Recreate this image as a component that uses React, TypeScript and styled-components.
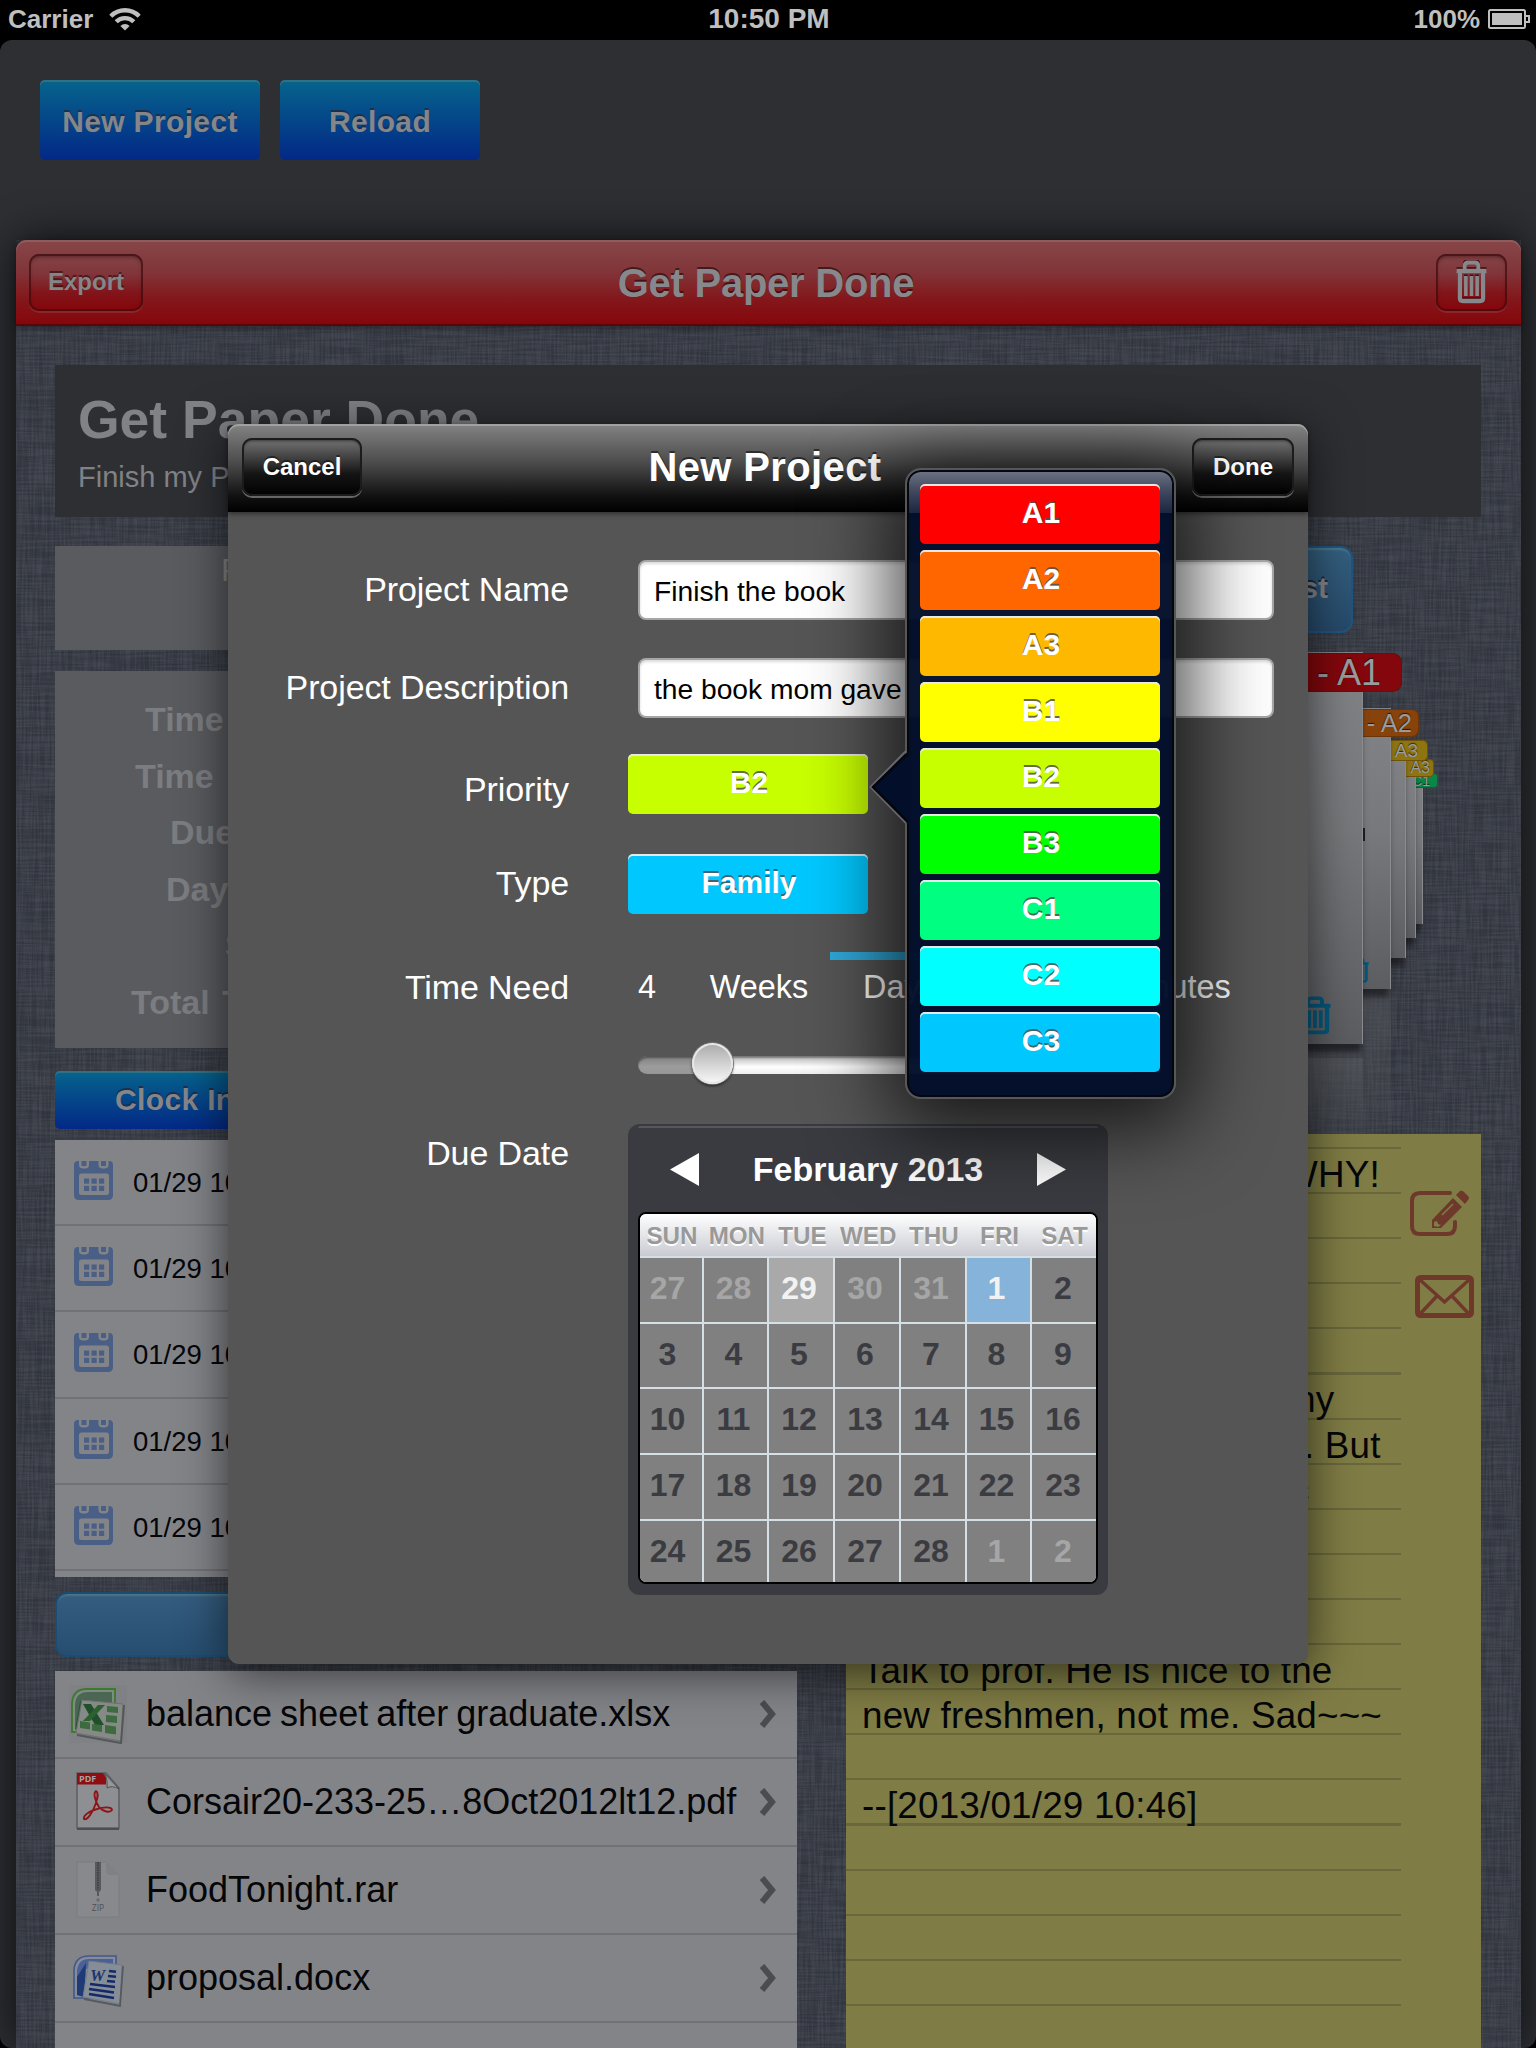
import React from "react";
import styled, { createGlobalStyle, css } from "styled-components";

const GlobalStyle = createGlobalStyle`
  html, body { margin: 0; padding: 0; background: #000; }
  *, *::before, *::after { box-sizing: border-box; }
  body { font-family: "Liberation Sans", Arial, Helvetica, sans-serif; }
`;

/* ---------- shell ---------- */

const Device = styled.div`
  position: relative;
  width: 1536px;
  height: 2048px;
  overflow: hidden;
  background: #000;
  display: flex;
  flex-direction: column;
`;

const StatusBar = styled.div`
  height: 40px;
  flex: none;
  display: grid;
  grid-template-columns: 1fr auto 1fr;
  align-items: center;
  padding: 0 6px 2px 8px;
  color: #bfbfbf;
  font-weight: bold;
  font-size: 26px;
`;

const StatusSide = styled.div<{ $end?: boolean }>`
  display: flex;
  align-items: center;
  gap: ${(p) => (p.$end ? 8 : 16)}px;
  justify-content: ${(p) => (p.$end ? "flex-end" : "flex-start")};
`;

const Clock = styled.div`
  font-size: 28px;
`;

const Screen = styled.div`
  flex: 1;
  display: flex;
  flex-direction: column;
  background: #2e2f33;
  border-radius: 12px;
  overflow: hidden;
`;

const Toolbar = styled.div`
  height: 200px;
  flex: none;
  display: flex;
  gap: 20px;
  padding: 40px 0 0 40px;
`;

const BlueButton = styled.div<{ $w: number; $h: number; $size: number }>`
  width: ${(p) => p.$w}px;
  height: ${(p) => p.$h}px;
  flex: none;
  display: flex;
  align-items: center;
  justify-content: center;
  border-radius: 5px;
  background: linear-gradient(#06648c, #032887);
  box-shadow: inset 0 2px 0 #2f7186;
  color: #85868a;
  font-size: ${(p) => p.$size}px;
  font-weight: bold;
  letter-spacing: 0.35px;
  text-shadow: 0 -2px 0 rgba(30, 45, 70, 0.9);
  padding-top: 3px;
`;

const Panel = styled.div`
  position: relative;
  width: 1505px;
  margin-left: 16px;
  flex: 1;
  display: flex;
  flex-direction: column;
  background: #343842;
  border-radius: 11px 11px 0 0;
  box-shadow: 0 0 44px rgba(0, 0, 0, 0.75);
`;

const Linen = styled.svg`
  position: absolute;
  inset: 0;
  width: 100%;
  height: 100%;
`;

const PanelHeader = styled.div`
  position: relative;
  height: 86px;
  flex: none;
  display: grid;
  grid-template-columns: 1fr auto 1fr;
  padding: 14px 14px 0 13px;
  border-radius: 11px 11px 0 0;
  background: linear-gradient(#874648, #81363a 35%, #83181c 68%, #85050a);
  box-shadow: inset 0 2px 0 #8f5c5e, inset 0 -2px 0 #5c0508, 0 2px 6px rgba(0, 0, 0, 0.35);
`;

const BarTitle = styled.div<{ $color: string; $track: number }>`
  align-self: start;
  padding-right: 4px;
  font-size: 40px;
  font-weight: bold;
  line-height: 58px;
  letter-spacing: ${(p) => p.$track}px;
  color: ${(p) => p.$color};
  text-shadow: 0 -2px 0 rgba(0, 0, 0, 0.5);
`;

const BarButton = styled.div<{ $w: number; $dark?: boolean; $end?: boolean }>`
  width: ${(p) => p.$w}px;
  height: ${(p) => (p.$dark ? 58 : 57)}px;
  justify-self: ${(p) => (p.$end ? "end" : "start")};
  display: flex;
  align-items: center;
  justify-content: center;
  padding-bottom: 1px;
  border-radius: 10px;
  font-size: 24px;
  font-weight: bold;
  text-shadow: 0 -2px 0 rgba(0, 0, 0, 0.45);
  ${(p) =>
    p.$dark
      ? css`
          color: #fff;
          background: linear-gradient(#777, #444 32%, #141414 62%, #000);
          box-shadow: inset 0 0 0 2px #1c1c1c, inset 0 3px 3px rgba(0, 0, 0, 0.5), 0 2px 0 #666;
        `
      : css`
          color: #858689;
          background: linear-gradient(#854649, #80353a 35%, #81151a 68%, #85050a);
          box-shadow: inset 0 0 0 2px rgba(62, 12, 16, 0.65), inset 0 3px 4px rgba(50, 0, 0, 0.5),
            0 2px 0 rgba(150, 60, 64, 0.5);
        `}
`;

const PanelBody = styled.div`
  position: relative;
  flex: 1;
  padding: 39px 40px 0 39px;
  display: flex;
  flex-direction: column;
`;

const Summary = styled.div`
  height: 152px;
  flex: none;
  padding: 23px 24px 0 23px;
  background: #2e2f33;
  color: #818286;
`;

const SummaryTitle = styled.div`
  font-size: 53.5px;
  line-height: 64px;
  font-weight: bold;
`;

const SummaryText = styled.div`
  font-size: 29px;
  line-height: 40px;
  margin-top: 5px;
`;

const Columns = styled.div`
  flex: 1;
  display: flex;
  justify-content: space-between;
  padding-top: 29px;
`;

const LeftColumn = styled.div`
  width: 742px;
  display: flex;
  flex-direction: column;
`;

const PriorityBox = styled.div`
  height: 104px;
  background: #5a5b5f;
  padding: 2px 0 0 166px;
  font-size: 32px;
  line-height: 44px;
  color: #85868a;
`;

const StatsBox = styled.div`
  height: 377px;
  margin: 21px 0 23px;
  padding-top: 20px;
  background: #5a5b5f;
`;

const Stat = styled.div<{ $indent: number }>`
  padding-left: ${(p) => p.$indent}px;
  font-size: 34px;
  line-height: 56.6px;
  font-weight: bold;
  word-spacing: 3px;
  color: #7c7d80;
  white-space: pre;
`;

const ClockButton = styled(BlueButton)`
  width: 300px;
  justify-content: flex-start;
  padding: 0 0 0 60px;
`;

const LogList = styled.div`
  height: 437px;
  margin: 11px 0 15px;
  overflow: hidden;
  background: #838488;
`;

const LogRow = styled.div`
  height: 86.2px;
  display: flex;
  align-items: center;
  gap: 20px;
  padding: 0 0 0 19px;
  border-bottom: 2px solid #717276;
  color: #050608;
  font-size: 27.5px;
  white-space: pre;
`;

const LogTime = styled.span`
  padding-top: 2px;
`;

const LogMark = styled.svg`
  margin-bottom: 3px;
`;

const AttachButton = styled.div`
  height: 65px;
  flex: none;
  border-radius: 12px;
  border: 2px solid #1e4c70;
  background: linear-gradient(#355d80, #264e70);
  box-shadow: inset 0 3px 2px -1px #4a7689;
`;

const FileList = styled.div`
  flex: 1;
  margin-top: 14px;
  background: #838488;
`;

const FileRow = styled.div`
  height: 88px;
  display: flex;
  align-items: center;
  padding: 0 20px 0 5px;
  border-bottom: 2px solid #717276;
`;

const FileName = styled.div`
  flex: 1;
  margin-left: 16px;
  font-size: 36px;
  line-height: 40px;
  word-spacing: -2px;
  padding-bottom: 1px;
  white-space: nowrap;
  color: #050608;
`;

const RightColumn = styled.div`
  width: 635px;
  display: flex;
  flex-direction: column;
`;

/* ---------- stacked project cards: free 3D carousel canvas ---------- */

const Deck = styled.div`
  position: relative;
  height: 588px;
  flex: none;
  overflow: hidden;
`;

const ListButton = styled.div`
  width: 260px;
  height: 87px;
  margin-left: 247px;
  border-radius: 12px;
  border: 2px solid #21557d;
  background: linear-gradient(#34607f, #26496a);
  box-shadow: inset 0 3px 2px -1px #4a7a94;
  display: flex;
  align-items: center;
  justify-content: flex-end;
  padding: 0 23px 3px 0;
  font-size: 30px;
  font-weight: bold;
  color: #84868a;
  text-shadow: 0 -2px 0 rgba(20, 30, 45, 0.8);
`;

const Sheet = styled.div<{ $right: number; $top: number; $bottom: number }>`
  position: absolute;
  left: 380px;
  width: ${(p) => p.$right - 380}px;
  top: ${(p) => p.$top}px;
  height: ${(p) => p.$bottom - p.$top}px;
  background: linear-gradient(#828387, #77787b 45%, #5c5d61);
  box-shadow: 0 10px 6px -2px rgba(25, 26, 30, 0.75), inset -1px 0 0 #8a8b8f;
`;

const Reflection = styled.div<{ $right: number; $top: number }>`
  position: absolute;
  left: 380px;
  width: ${(p) => p.$right - 380}px;
  top: ${(p) => p.$top}px;
  bottom: 0;
  background: linear-gradient(rgba(90, 92, 96, 0.5), rgba(70, 72, 78, 0.15));
`;

const Badge = styled.div<{ $right: number; $top: number; $h: number; $size: number; $pad: number; $bg: string }>`
  position: absolute;
  left: 380px;
  width: ${(p) => p.$right - 380}px;
  top: ${(p) => p.$top}px;
  height: ${(p) => p.$h}px;
  padding-right: ${(p) => p.$pad}px;
  display: flex;
  align-items: center;
  justify-content: flex-end;
  border-radius: ${(p) => p.$h * 0.25}px;
  background: ${(p) => p.$bg};
  box-shadow: inset 0 0 0 1px rgba(60, 30, 0, 0.4);
  font-size: ${(p) => p.$size}px;
  color: #9a9b9e;
  text-shadow: 0 -1px 1px rgba(0, 0, 0, 0.7);
  white-space: pre;
`;

const DeckGlyph = styled.div<{ $x: number; $y: number }>`
  position: absolute;
  left: ${(p) => p.$x}px;
  top: ${(p) => p.$y}px;
  line-height: 0;
`;

/* ---------- notes ---------- */

const Notes = styled.div`
  flex: 1;
  display: flex;
  background: #7f7c45;
`;

const NoteLines = styled.div`
  width: 555px;
  padding: 14px 0 0 16px;
  background: repeating-linear-gradient(transparent 0 43px, #69673b 43px 45.1px) 0 -30px;
  background-size: 100% 1200px;
`;

const NoteLine = styled.div<{ $indent: number }>`
  height: 45.1px;
  padding-left: ${(p) => p.$indent}px;
  font-size: 36.8px;
  letter-spacing: 0.2px;
  line-height: 54px;
  color: #050608;
  white-space: pre;
`;

const NoteActions = styled.div`
  flex: 1;
  display: flex;
  flex-direction: column;
  align-items: flex-end;
  gap: 37px;
  padding: 56px 7px 0 0;
`;

const ComposeMark = styled.svg`
  margin-right: 4px;
`;

/* ---------- modal ---------- */

const Modal = styled.div`
  position: absolute;
  left: 228px;
  top: 424px;
  width: 1080px;
  height: 1240px;
  display: flex;
  flex-direction: column;
  border-radius: 11px;
  background: #555;
  box-shadow: 0 8px 48px rgba(0, 0, 0, 0.62);
`;

const ModalHeader = styled.div`
  height: 88px;
  flex: none;
  display: grid;
  grid-template-columns: 1fr auto 1fr;
  padding: 14px;
  border-radius: 11px 11px 0 0;
  background: linear-gradient(#838383, #4a4a4a 45%, #111 82%, #000);
  box-shadow: inset 0 2px 0 #a0a0a0, 0 2px 5px rgba(0, 0, 0, 0.45);
`;

const ModalTitle = styled(BarTitle)`
  padding-right: 6px;
`;

const Form = styled.div`
  padding-top: 48px;
  display: flex;
  flex-direction: column;
`;

const FormRow = styled.div<{ $h: number; $gap: number }>`
  height: ${(p) => p.$h}px;
  margin-bottom: ${(p) => p.$gap}px;
  display: flex;
`;

const Label = styled.div<{ $top: number }>`
  width: 341px;
  flex: none;
  margin-right: 59px;
  padding-top: ${(p) => p.$top}px;
  text-align: right;
  font-size: 34px;
  letter-spacing: -0.1px;
  line-height: 40px;
  color: #fff;
`;

const Field = styled.div`
  width: 636px;
  height: 60px;
  margin-left: 10px;
  display: flex;
  align-items: center;
  padding: 2px 14px 0;
  border: 2px solid #a6a6a6;
  border-radius: 8px;
  background: #fff;
  box-shadow: inset 0 2px 3px rgba(0, 0, 0, 0.15);
  font-size: 28.2px;
  color: #000;
  white-space: pre;
`;

const Choice = styled.div<{ $bg: string }>`
  width: 240px;
  height: 60px;
  flex: none;
  display: flex;
  align-items: center;
  justify-content: center;
  padding: 0 0 2px 2px;
  border-radius: 5px;
  background: ${(p) => p.$bg};
  box-shadow: inset 0 2px 0 #e8e8e8;
  color: #fff;
  font-size: 30px;
  font-weight: bold;
  text-shadow: 0 -2px 0 rgba(80, 80, 80, 0.85);
`;

const TimeControl = styled.div`
  width: 640px;
  margin-left: 10px;
`;

const Units = styled.div`
  display: flex;
  height: 60px;
  color: #fff;
  font-size: 32.4px;
`;

const Amount = styled.div`
  width: 50px;
  padding-top: 17px;
`;

const Unit = styled.div<{ $active?: boolean; $w?: number }>`
  width: ${(p) => p.$w ?? 142}px;
  height: 54px;
  padding-top: 9px;
  text-align: center;
  border-top: 8px solid ${(p) => (p.$active ? "#2fa8d9" : "transparent")};
`;

const Slider = styled.div`
  height: 18px;
  width: 500px;
  margin-top: 44px;
  display: flex;
  align-items: center;
  border-radius: 9px;
  background: linear-gradient(90deg, rgba(96, 96, 96, 0.62) 75px, transparent 75px), linear-gradient(#b4b4b4, #fff 60%, #eee);
  box-shadow: inset 0 2px 2px rgba(0, 0, 0, 0.35);
`;

const Knob = styled.div`
  width: 41px;
  height: 41px;
  margin: -3px 0 0 54px;
  border-radius: 50%;
  background: linear-gradient(#a9a9a9, #fafafa);
  box-shadow: inset 0 0 0 2px #e6e6e6, 0 0 0 1px #777, 0 2px 3px rgba(0, 0, 0, 0.6);
`;

/* ---------- calendar ---------- */

const Calendar = styled.div`
  width: 480px;
  height: 471px;
  padding: 2px 10px 11px;
  border-radius: 12px;
  background: #3a3b40;
`;

const MonthBar = styled.div`
  height: 86px;
  display: flex;
  align-items: center;
  justify-content: space-between;
  padding: 0 32px 2px;
  border-top: 2px solid #55565e;
  border-radius: 2px;
  color: #fff;
  font-size: 34px;
  font-weight: bold;
  line-height: 40px;
`;

const MonthGrid = styled.div`
  height: 372px;
  border: 2px solid #000;
  border-radius: 8px;
  overflow: hidden;
  background: #d5dfe6;
`;

const WeekHead = styled.div`
  height: 42px;
  display: grid;
  grid-template-columns: 64px repeat(5, 65.7px) 64px;
  background: linear-gradient(#fff, #c9cbd2);
  color: #999;
  font-size: 24.2px;
  font-weight: bold;
  line-height: 43px;
  text-align: center;
  text-shadow: 0 2px 0 #fff;
`;

const Days = styled.div`
  display: grid;
  grid-template-columns: 62px 63px 64px 64px 64px 63px 64px;
  grid-template-rows: 64px 63px 64px 64px 64px;
  gap: 2px;
  padding-top: 2px;
`;

type DayKind = "normal" | "muted" | "today" | "picked";
const dayBg: Record<DayKind, string> = { normal: "#808080", muted: "#808080", today: "#a9a9a9", picked: "#86b3d9" };
const dayFg: Record<DayKind, string> = { normal: "#3b3c42", muted: "#a6a6a6", today: "#f2f2f2", picked: "#f2f2f2" };

const Day = styled.div<{ $kind: DayKind }>`
  display: flex;
  align-items: center;
  justify-content: center;
  padding: 0 4px 3px 0;
  font-size: 32px;
  font-weight: bold;
  background: ${(p) => dayBg[p.$kind]};
  color: ${(p) => dayFg[p.$kind]};

  &:nth-child(7n + 1) {
    padding-right: 7px;
  }

  &:nth-child(7n) {
    padding-right: 2px;
  }
`;

/* ---------- priority popover ---------- */

const Popover = styled.div`
  position: absolute;
  left: 905px;
  top: 468px;
  width: 271px;
  height: 631px;
  padding: 14px 13px 0;
  display: flex;
  flex-direction: column;
  gap: 6px;
  border-radius: 16px;
  border: 2px solid #56575a;
  background: linear-gradient(#6f7585, #414a60 20px, #1b2640 43px, rgba(2, 14, 42, 0.97) 43px);
  box-shadow: inset 0 0 0 2px #05070c, 0 14px 80px 16px rgba(0, 0, 0, 0.72);
`;

const PopArrow = styled.svg`
  position: absolute;
  left: -38px;
  top: 280px;
`;

/* ---------- drawings ---------- */

const LinenTexture = () => (
  <Linen aria-hidden="true">
    <filter id="weft" x="0" y="0" width="100%" height="100%" colorInterpolationFilters="sRGB">
      <feTurbulence type="fractalNoise" baseFrequency="0.02 0.5" numOctaves={3} seed={4} />
      <feColorMatrix values="3 0 0 0 -1  3 0 0 0 -1  3 0 0 0 -1  0 0 0 0 0.04" />
    </filter>
    <filter id="warp" x="0" y="0" width="100%" height="100%" colorInterpolationFilters="sRGB">
      <feTurbulence type="fractalNoise" baseFrequency="0.5 0.02" numOctaves={3} seed={9} />
      <feColorMatrix values="3 0 0 0 -1  3 0 0 0 -1  3 0 0 0 -1  0 0 0 0 0.04" />
    </filter>
    <rect width="100%" height="100%" filter="url(#weft)" />
    <rect width="100%" height="100%" filter="url(#warp)" />
  </Linen>
);

const Wifi = () => (
  <svg width="32" height="24" viewBox="0 0 32 24" fill="none" stroke="#bfbfbf" strokeWidth="4.4">
    <path d="M1.8 9.2 A20 20 0 0 1 30.2 9.2" />
    <path d="M7.2 14.8 A12.4 12.4 0 0 1 24.8 14.8" />
    <path d="M16 23.6 L11.4 19 A6.5 6.5 0 0 1 20.6 19 Z" fill="#bfbfbf" stroke="none" />
  </svg>
);

const Battery = () => (
  <svg width="42" height="20" viewBox="0 0 42 20">
    <rect x="1" y="1" width="36" height="18" rx="1.5" fill="none" stroke="#bfbfbf" strokeWidth="2" />
    <rect x="4" y="4" width="30" height="12" fill="#bfbfbf" />
    <path d="M38 7h3v6h-3" fill="none" stroke="#bfbfbf" strokeWidth="2" />
  </svg>
);

const TrashGlyph = ({ color, w, h, shadow }: { color: string; w: number; h: number; shadow?: boolean }) => {
  const shape = (
    <>
      <path d="M9 10 V6 Q9 2.500 12.500 2.500 H19.500 Q23 2.500 23 6 V10" strokeWidth="4" />
      <path d="M0.5 11 H31.5" strokeWidth="4.4" />
      <path d="M4 11 V38 Q4 41 7 41 H25 Q28 41 28 38 V11" strokeWidth="4.4" />
      <path d="M10.200 16 V36 M16 16 V36 M21.800 16 V36" strokeWidth="3.800" />
    </>
  );
  return (
    <svg width={w} height={h} viewBox="0 0 32 44" fill="none" preserveAspectRatio="none">
      {shadow && (
        <g stroke="#4a0a0e" transform="translate(0 -1.6)">
          {shape}
        </g>
      )}
      <g stroke={color}>{shape}</g>
    </svg>
  );
};

const LogIcon = () => (
  <LogMark width="39" height="39" viewBox="0 0 39 39">
    <path fill="#4a5f86" d="M4 0H35Q39 0 39 4V34Q39 39 34 39H5Q0 39 0 34V4Q0 0 4 0Z" />
    <path fill="#838488" d="M5 0h10v4q0 3-3.500 3.500H8.500Q5 7 5 4ZM24.500 0h10v4q0 3-3.500 3.500h-3q-3.500-.5-3.500-3.500Z" />
    <rect x="7.500" y="0" width="5" height="5" fill="#4a5f86" />
    <rect x="27" y="0" width="5" height="5" fill="#4a5f86" />
    <rect x="5" y="12.500" width="30" height="21.500" rx="2.500" fill="#838488" />
    {[0, 1, 2].map((c) =>
      [0, 1].map((r) => (
        <rect key={`${c}${r}`} x={10 + c * 7.5} y={17.5 + r * 7.3} width="5.200" height="5.200" fill="#4a5f86" />
      ))
    )}
  </LogMark>
);

const ExcelIcon = () => (
  <svg width="70" height="86" viewBox="0 0 70 86">
    <path d="M9 14h58v58H9z" fill="#808184" />
    <path d="M12 61V32Q13 18 27 18H55V61Z" fill="#7f8a82" stroke="#3c7a2c" strokeWidth="1.800" />
    <path d="M15 58V33Q16 21 28 21H52V34L20 34Z" fill="#4c6654" />
    <path d="M15 58 L20 30 L26 28 L22 62Z" fill="#2f5636" />
    <path d="M22 29 63 33 61 70 16 62Z" fill="#858a86" stroke="#6d726f" strokeWidth="1" />
    <path d="M17 64 61 72 64 34" fill="none" stroke="#54575a" strokeWidth="2" />
    <path d="M23 33h8l13 21h-9Z" fill="#20502a" />
    <path d="M45 34h-7L23 50h7Z" fill="#2b6030" />
    <path fill="#3d6b3f" d="M47 35l11 1v6l-11-1zM46 44l11 1v7l-11-1zM45 54l11 1.500v8L45 62zM32 53l10 1v7l-10-1.500zM20 50l10 1.500v7L20 57z" />
  </svg>
);

const PdfIcon = () => (
  <svg width="70" height="86" viewBox="0 0 70 86">
    <path d="M17 14H46L59 29V69H17Z" fill="#8e8f92" stroke="#5d5e61" strokeWidth="1.500" />
    <path d="M17 70H59" stroke="#4c4d50" strokeWidth="2" />
    <path d="M17 14H43L46 18V25.500H17Z" fill="#8d0f14" />
    <path d="M44 14 59 30 Q52 26 47 29 Q48 20 44 14Z" fill="#97989b" stroke="#505154" strokeWidth="1" />
    <text x="19" y="23.200" fontSize="9" fontWeight="bold" fontFamily="Open Sans, sans-serif" fill="#a5a2a4">PDF</text>
    <path
      d="M36 32 C33 34 35 42 39 48 C43 53 50 54 52 51 C52 47 42 48 34 51 C28 53 23 57 24 60 C27 62 33 53 36 44 C38 38 38 33 36 32Z"
      fill="none"
      stroke="#8d1518"
      strokeWidth="1.900"
    />
  </svg>
);

const ZipIcon = () => (
  <svg width="70" height="86" viewBox="0 0 70 86">
    <path d="M17 15H46L59 28V70H17Z" fill="#88898c" stroke="#7b7c80" strokeWidth="1" />
    <path d="M46 15 59 28H50Q46 28 46 24Z" fill="#808185" />
    <path d="M35 15h6v28l-3 3-3-3Z" fill="#58595c" />
    <path d="M38 15v28" stroke="#3d3e41" strokeWidth="1.500" strokeDasharray="1.500 1" />
    <path d="M38 45v4" stroke="#58595c" strokeWidth="2" />
    <circle cx="38" cy="53" r="1.700" fill="#6a6b6e" />
    <text x="38" y="64" fontSize="8.500" textAnchor="middle" fontFamily="Open Sans, sans-serif" fill="#4f5053">ZIP</text>
  </svg>
);

const WordIcon = () => (
  <svg width="70" height="86" viewBox="0 0 70 86">
    <path d="M14 63V35Q15 21 29 21H56V63Z" fill="#858b98" stroke="#43588a" strokeWidth="1.600" />
    <path d="M17 60V36Q18 24 29 24H53V32L26 34 24 62Z" fill="#4a6096" />
    <path d="M17 60V42L26 28 24 62Z" fill="#1e3a77" />
    <path d="M29 26 62 30 60 69 23 62Z" fill="#858d97" stroke="#747b86" strokeWidth="1" />
    <path d="M24 64 60 71 63 31" fill="none" stroke="#56595e" strokeWidth="1.800" />
    <text x="30" y="46" fontSize="17" fontWeight="bold" fontStyle="italic" fontFamily="Liberation Serif, serif" fill="#1c3570">W</text>
    <path d="M49 36l7 .7M48 41l8 .7M47 46l8 .7M30 49l25 3M29 54l25 3.500M29 59l25 4" stroke="#15296a" strokeWidth="2.600" />
  </svg>
);

const fileIcons = { excel: ExcelIcon, pdf: PdfIcon, zip: ZipIcon, word: WordIcon };

const Chevron = () => (
  <svg width="18" height="28" viewBox="0 0 18 28">
    <path d="M3 2 13 14 3 26" fill="none" stroke="#4b4c50" strokeWidth="6" />
  </svg>
);

const ComposeIcon = () => (
  <ComposeMark width="60" height="48" viewBox="0 0 60 48">
    <path
      d="M40 3H10Q2 3 2 11V36Q2 44 10 44H37Q45 44 45 36V32"
      fill="none"
      stroke="#6e382b"
      strokeWidth="4"
      strokeLinecap="round"
    />
    <path d="M22 30 43 8 52 17 31 38H22Z" fill="#6e382b" />
    <path d="M46 5 50 1Q52 0 54 2L58 6Q60 8 58 10L55 14Z" fill="#6e382b" />
    <path d="M32 25 43 14" stroke="#7f7c45" strokeWidth="1.600" />
    <path d="M24 32l3-1 1 3 3 1-3 2-4-1Z" fill="#7f7c45" />
  </ComposeMark>
);

const MailIcon = () => (
  <svg width="59" height="43" viewBox="0 0 59 43" fill="none" stroke="#6e382b">
    <rect x="2.500" y="2.500" width="54" height="38" rx="3" strokeWidth="5" />
    <path d="M4 4 29.500 27 55 4M4 40 22 21M55 40 37 21" strokeWidth="3.400" />
  </svg>
);

/* ---------- data ---------- */

const files: { icon: keyof typeof fileIcons; name: string }[] = [
  { icon: "excel", name: "balance sheet after graduate.xlsx" },
  { icon: "pdf", name: "Corsair20-233-25…8Oct2012lt12.pdf" },
  { icon: "zip", name: "FoodTonight.rar" },
  { icon: "word", name: "proposal.docx" },
];

const notes: [string, number][] = [
  ["WHY!", 421],
  ["", 0],
  ["", 0],
  ["", 0],
  ["", 0],
  ["my", 423],
  [". But", 442],
  ["c", 429],
  ["", 0],
  ["", 0],
  ["", 0],
  ["Talk to prof. He is nice to the", 0],
  ["new freshmen, not me. Sad~~~", 0],
  ["", 0],
  ["--[2013/01/29 10:46]", 0],
];

const priorities: [string, string][] = [
  ["A1", "#ff0000"],
  ["A2", "#ff6600"],
  ["A3", "#ffb800"],
  ["B1", "#ffff00"],
  ["B2", "#c8ff00"],
  ["B3", "#00ff00"],
  ["C1", "#00ff80"],
  ["C2", "#00ffff"],
  ["C3", "#00c8ff"],
];

const monthDays: { n: number; kind: DayKind }[] = [
  ...[27, 28, 29, 30, 31].map((n) => ({ n, kind: (n === 29 ? "today" : "muted") as DayKind })),
  ...Array.from({ length: 28 }, (_, i) => ({ n: i + 1, kind: (i === 0 ? "picked" : "normal") as DayKind })),
  { n: 1, kind: "muted" },
  { n: 2, kind: "muted" },
];

const PriorityDeck = () => (
  <Deck>
    <ListButton>st</ListButton>
    <Reflection $right={545} $top={442} />
    <Reflection $right={517} $top={512} />
    <Sheet $right={577} $top={229} $bottom={378} />
    <Badge $right={592} $top={227} $h={15} $size={14} $pad={8} $bg="#0c8549">C1</Badge>
    <Sheet $right={570} $top={215} $bottom={392} />
    <Badge $right={588} $top={213} $h={18} $size={16} $pad={4} $bg="#8f7510">A3</Badge>
    <Sheet $right={560} $top={196} $bottom={412} />
    <Badge $right={582} $top={194} $h={21} $size={19} $pad={10} $bg="#8f7510">A3</Badge>
    <Sheet $right={545} $top={162} $bottom={443} />
    <Badge $right={573} $top={163} $h={28} $size={25.5} $pad={7} $bg="#88430c">- A2</Badge>
    <DeckGlyph $x={501} $y={411}>
      <TrashGlyph color="#05587c" w={22} h={26} />
    </DeckGlyph>
    <DeckGlyph $x={508} $y={282}>
      <svg width="11" height="13"><rect width="11" height="13" fill="#1c1d20" /></svg>
    </DeckGlyph>
    <Sheet $right={517} $top={106} $bottom={498} />
    <Badge $right={556} $top={107} $h={39} $size={36} $pad={21} $bg="#83070c">- A1</Badge>
    <DeckGlyph $x={453} $y={450}>
      <TrashGlyph color="#05587c" w={32} h={39} />
    </DeckGlyph>
  </Deck>
);

const NewProjectModal = () => (
  <Modal>
    <ModalHeader>
      <BarButton $w={120} $dark>Cancel</BarButton>
      <ModalTitle $color="#fff" $track={0.38}>New Project</ModalTitle>
      <BarButton $w={102} $dark $end>Done</BarButton>
    </ModalHeader>
    <Form>
      <FormRow $h={60} $gap={38}>
        <Label $top={9}>Project Name</Label>
        <Field>Finish the book</Field>
      </FormRow>
      <FormRow $h={60} $gap={36}>
        <Label $top={9}>Project Description</Label>
        <Field>the book mom gave</Field>
      </FormRow>
      <FormRow $h={60} $gap={40}>
        <Label $top={15}>Priority</Label>
        <Choice $bg="#c8ff00">B2</Choice>
      </FormRow>
      <FormRow $h={60} $gap={38}>
        <Label $top={9}>Type</Label>
        <Choice $bg="#00c8ff">Family</Choice>
      </FormRow>
      <FormRow $h={172} $gap={0}>
        <Label $top={15}>Time Need</Label>
        <TimeControl>
          <Units>
            <Amount>4</Amount>
            <Unit>Weeks</Unit>
            <Unit $active $w={140}>Days</Unit>
            <Unit />
            <Unit $w={124}>Minutes</Unit>
          </Units>
          <Slider>
            <Knob />
          </Slider>
        </TimeControl>
      </FormRow>
      <FormRow $h={471} $gap={0}>
        <Label $top={9}>Due Date</Label>
        <Calendar>
          <MonthBar>
            <svg width="29" height="33"><path d="M29 0V33L0 16.500Z" fill="#fff" /></svg>
            February 2013
            <svg width="29" height="33"><path d="M0 0V33L29 16.500Z" fill="#fff" /></svg>
          </MonthBar>
          <MonthGrid>
            <WeekHead>
              {["SUN", "MON", "TUE", "WED", "THU", "FRI", "SAT"].map((d) => (
                <span key={d}>{d}</span>
              ))}
            </WeekHead>
            <Days>
              {monthDays.map((d, i) => (
                <Day key={i} $kind={d.kind}>{d.n}</Day>
              ))}
            </Days>
          </MonthGrid>
        </Calendar>
      </FormRow>
    </Form>
  </Modal>
);

const PriorityPopover = () => (
  <Popover>
    <PopArrow width="42" height="78" viewBox="0 0 42 78">
      <path d="M42 2 36 4 2 37 36 72 42 76Z" fill="#020e2a" />
      <path d="M37 1 1.500 37 37 73" fill="none" stroke="#66676b" strokeWidth="2" />
      <path d="M39 3.500 4 37 39 72" fill="none" stroke="#05070c" strokeWidth="2.500" />
    </PopArrow>
    {priorities.map(([name, color]) => (
      <Choice key={name} $bg={color}>{name}</Choice>
    ))}
  </Popover>
);

export default function App() {
  return (
    <Device>
      <GlobalStyle />
      <StatusBar>
        <StatusSide>
          Carrier
          <Wifi />
        </StatusSide>
        <Clock>10:50 PM</Clock>
        <StatusSide $end>
          100%
          <Battery />
        </StatusSide>
      </StatusBar>
      <Screen>
        <Toolbar>
          <BlueButton $w={220} $h={80} $size={30}>New Project</BlueButton>
          <BlueButton $w={200} $h={80} $size={30}>Reload</BlueButton>
        </Toolbar>
        <Panel>
          <LinenTexture />
          <PanelHeader>
            <BarButton $w={114}>Export</BarButton>
            <BarTitle $color="#87888b" $track={-0.25}>Get Paper Done</BarTitle>
            <BarButton $w={71} $end>
              <TrashGlyph color="#87888b" w={31} h={44} shadow />
            </BarButton>
          </PanelHeader>
          <PanelBody>
            <Summary>
              <SummaryTitle>Get Paper Done</SummaryTitle>
              <SummaryText>Finish my P</SummaryText>
            </Summary>
            <Columns>
              <LeftColumn>
                <PriorityBox>P</PriorityBox>
                <StatsBox>
                  <Stat $indent={90}>Time</Stat>
                  <Stat $indent={80}>Time</Stat>
                  <Stat $indent={115}>Due</Stat>
                  <Stat $indent={111}>Day</Stat>
                  <Stat $indent={170}>S</Stat>
                  <Stat $indent={76}>Total T</Stat>
                </StatsBox>
                <ClockButton $w={300} $h={58} $size={30}>Clock In</ClockButton>
                <LogList>
                  {[0, 1, 2, 3, 4].map((i) => (
                    <LogRow key={i}>
                      <LogIcon />
                      <LogTime>01/29 10</LogTime>
                    </LogRow>
                  ))}
                </LogList>
                <AttachButton />
                <FileList>
                  {files.map((f) => {
                    const Icon = fileIcons[f.icon];
                    return (
                      <FileRow key={f.name}>
                        <Icon />
                        <FileName>{f.name}</FileName>
                        <Chevron />
                      </FileRow>
                    );
                  })}
                </FileList>
              </LeftColumn>
              <RightColumn>
                <PriorityDeck />
                <Notes>
                  <NoteLines>
                    {notes.map(([text, indent], i) => (
                      <NoteLine key={i} $indent={indent}>{text}</NoteLine>
                    ))}
                  </NoteLines>
                  <NoteActions>
                    <ComposeIcon />
                    <MailIcon />
                  </NoteActions>
                </Notes>
              </RightColumn>
            </Columns>
          </PanelBody>
        </Panel>
      </Screen>
      <NewProjectModal />
      <PriorityPopover />
    </Device>
  );
}
